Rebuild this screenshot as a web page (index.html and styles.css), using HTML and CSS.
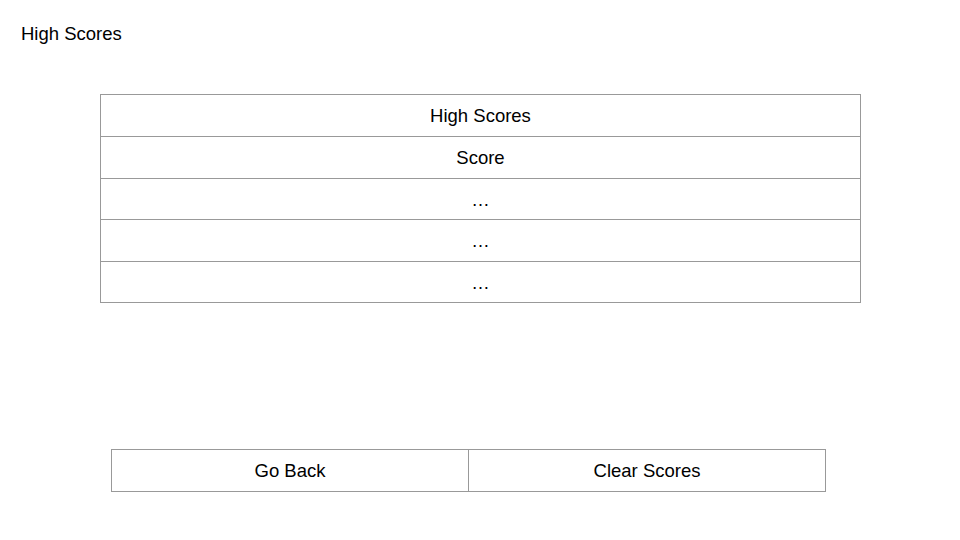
FILE: index.html
```html
<!DOCTYPE html>
<html>
<head>
<meta charset="utf-8">
<link rel="stylesheet" href="styles.css">
</head>
<body>
<div class="page">
  <h1 class="title">High Scores</h1>
  <div class="table">
    <div class="row">High Scores</div>
    <div class="row">Score</div>
    <div class="row short">…</div>
    <div class="row">…</div>
    <div class="row short">…</div>
  </div>
  <div class="buttons">
    <div class="btn">Go Back</div>
    <div class="btn">Clear Scores</div>
  </div>
</div>
</body>
</html>
```

FILE: styles.css
```css
html, body {
  margin: 0;
  padding: 0;
  background: #fff;
}
.page {
  width: 960px;
  height: 540px;
  font-family: "Liberation Sans", Arial, sans-serif;
  font-size: 18.5px;
  color: #000;
  box-sizing: border-box;
  padding-top: 23px;
}
.title {
  margin: 0 0 0 21px;
  font-size: 18.5px;
  font-weight: normal;
  line-height: 21px;
}
.table {
  margin: 50px 0 0 100px;
  width: 761px;
  border: 1px solid #999;
  border-bottom: none;
  box-sizing: border-box;
}
.row {
  height: 42px;
  box-sizing: border-box;
  border-bottom: 1px solid #999;
  padding-top: 1px;
  display: flex;
  align-items: center;
  justify-content: center;
}
.row.short {
  height: 41px;
}
.buttons {
  margin: 146px 0 0 111px;
  width: 715px;
  height: 43px;
  display: grid;
  grid-template-columns: 356px 1fr;
  border: 1px solid #999;
  box-sizing: border-box;
}
.btn {
  display: flex;
  align-items: center;
  justify-content: center;
  padding-top: 1px;
}
.btn + .btn {
  border-left: 1px solid #999;
}
```
